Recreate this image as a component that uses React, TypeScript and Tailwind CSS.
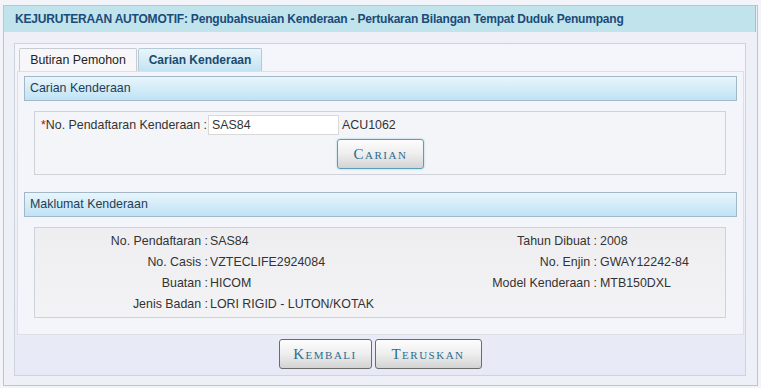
import React from 'react';

const headerCls =
  'h-[25px] border border-[#a3b8c6] bg-gradient-to-b from-[#e8f5fc] to-[#c0e3f4] flex items-center pl-[5px] text-[#1f3d58]';

const btnCls =
  'h-[30px] rounded-[3px] bg-gradient-to-b from-[#fdfdfd] via-[#eeeeee] to-[#d3d3d3] flex items-center justify-center text-[15px] tracking-[1.5px] text-[#2b6d8d] [font-variant:small-caps]';

const details: [string, string, string, string][] = [
  ['No. Pendaftaran', 'SAS84', 'Tahun Dibuat', '2008'],
  ['No. Casis', 'VZTECLIFE2924084', 'No. Enjin', 'GWAY12242-84'],
  ['Buatan', 'HICOM', 'Model Kenderaan', 'MTB150DXL'],
  ['Jenis Badan', 'LORI RIGID - LUTON/KOTAK', '', ''],
];

const App: React.FC = () => {
  return (
    <div className="w-[761px] h-[388px] bg-[#f3f4fa] pt-[5px] pl-[3px] text-[12.4px] text-[#333] font-['Liberation_Sans',Arial,sans-serif] overflow-hidden">
      <div className="w-[755px] h-[381px] border border-[#b9c4d4] bg-[#eef0f8] flex flex-col">
        {/* Title bar */}
        <div className="h-[26px] mr-[1px] bg-[#c0e3ec] border-r border-[#a8bcc6] flex items-center pl-[11px] text-[12px] tracking-[-0.2px] font-bold text-[#1b4b78]">
          KEJURUTERAAN AUTOMOTIF: Pengubahsuaian Kenderaan - Pertukaran Bilangan Tempat Duduk Penumpang
        </div>

        {/* Tabs container */}
        <div className="ml-[10px] mt-[11px] w-[732px] h-[333px] border border-[#cfd3de] bg-gradient-to-b from-[#f5f6fb] to-[#e7eaf6] px-[2px] pt-[4px]">
          <div className="flex items-end pl-[2px] gap-[1px] h-[23px]">
            <div className="w-[118px] h-[23px] border border-b-0 border-[#c8cbd3] bg-[#f7f7fa] rounded-t-[2px] flex items-center justify-center text-[#222]">
              Butiran Pemohon
            </div>
            <div className="w-[124px] h-[23px] border border-b-0 border-[#b3cad6] bg-gradient-to-b from-[#e9f5fb] to-[#c3e3f2] rounded-t-[2px] flex items-center justify-center text-[12px] font-bold text-[#1b4a70]">
              Carian Kenderaan
            </div>
          </div>

          {/* Tab panel */}
          <div className="w-[727px] h-[264px] border border-[#dcdfe8] bg-[#f4f5fa] px-[6px] pt-[4px]">
            <div className={headerCls}>Carian Kenderaan</div>

            <div className="mt-[10px] ml-[10px] w-[692px] h-[64px] border border-[#cfd2d8] bg-[#f4f5f9] pt-[3px]">
              <div className="flex items-center pl-[6px] h-[20px]">
                <span className="w-[167px]">
                  <span className="text-[#d40000]">*</span>No. Pendaftaran Kenderaan :
                </span>
                <div className="w-[131px] h-[20px] border border-[#d9d9d9] bg-white flex items-center pl-[3px]">SAS84</div>
                <span className="ml-[3px]">ACU1062</span>
              </div>
              <div className="mt-[4px] ml-[302px]">
                <button className={`${btnCls} w-[87px] border border-[#5c9db8] shadow-[0_0_2px_#8cc3d8] font-['Liberation_Serif',serif]`}>Carian</button>
              </div>
            </div>

            <div className={`${headerCls} mt-[17px]`}>Maklumat Kenderaan</div>

            <div className="mt-[10px] ml-[10px] w-[692px] h-[91px] border border-[#cfd2d8] bg-gradient-to-b from-[#eeeef1] to-[#f3f3f6] pt-[3px]">
              {details.map(([l1, v1, l2, v2]) => (
                <div key={l1} className="grid grid-cols-[173px_200px_189px_1fr] h-[21px] items-center">
                  <span className="text-right">{l1} :</span>
                  <span className="pl-[2px]">{v1}</span>
                  <span className="text-right">{l2 ? `${l2} :` : ''}</span>
                  <span className="pl-[3px]">{v2}</span>
                </div>
              ))}
            </div>
          </div>

          <div className="mt-[4px] flex justify-center gap-[3px] font-['Liberation_Serif',serif]">
            <button className={`${btnCls} w-[93px] border border-[#6b6b6b]`}>Kembali</button>
            <button className={`${btnCls} w-[107px] border border-[#6b6b6b]`}>Teruskan</button>
          </div>
        </div>
      </div>
    </div>
  );
};

export default App;
